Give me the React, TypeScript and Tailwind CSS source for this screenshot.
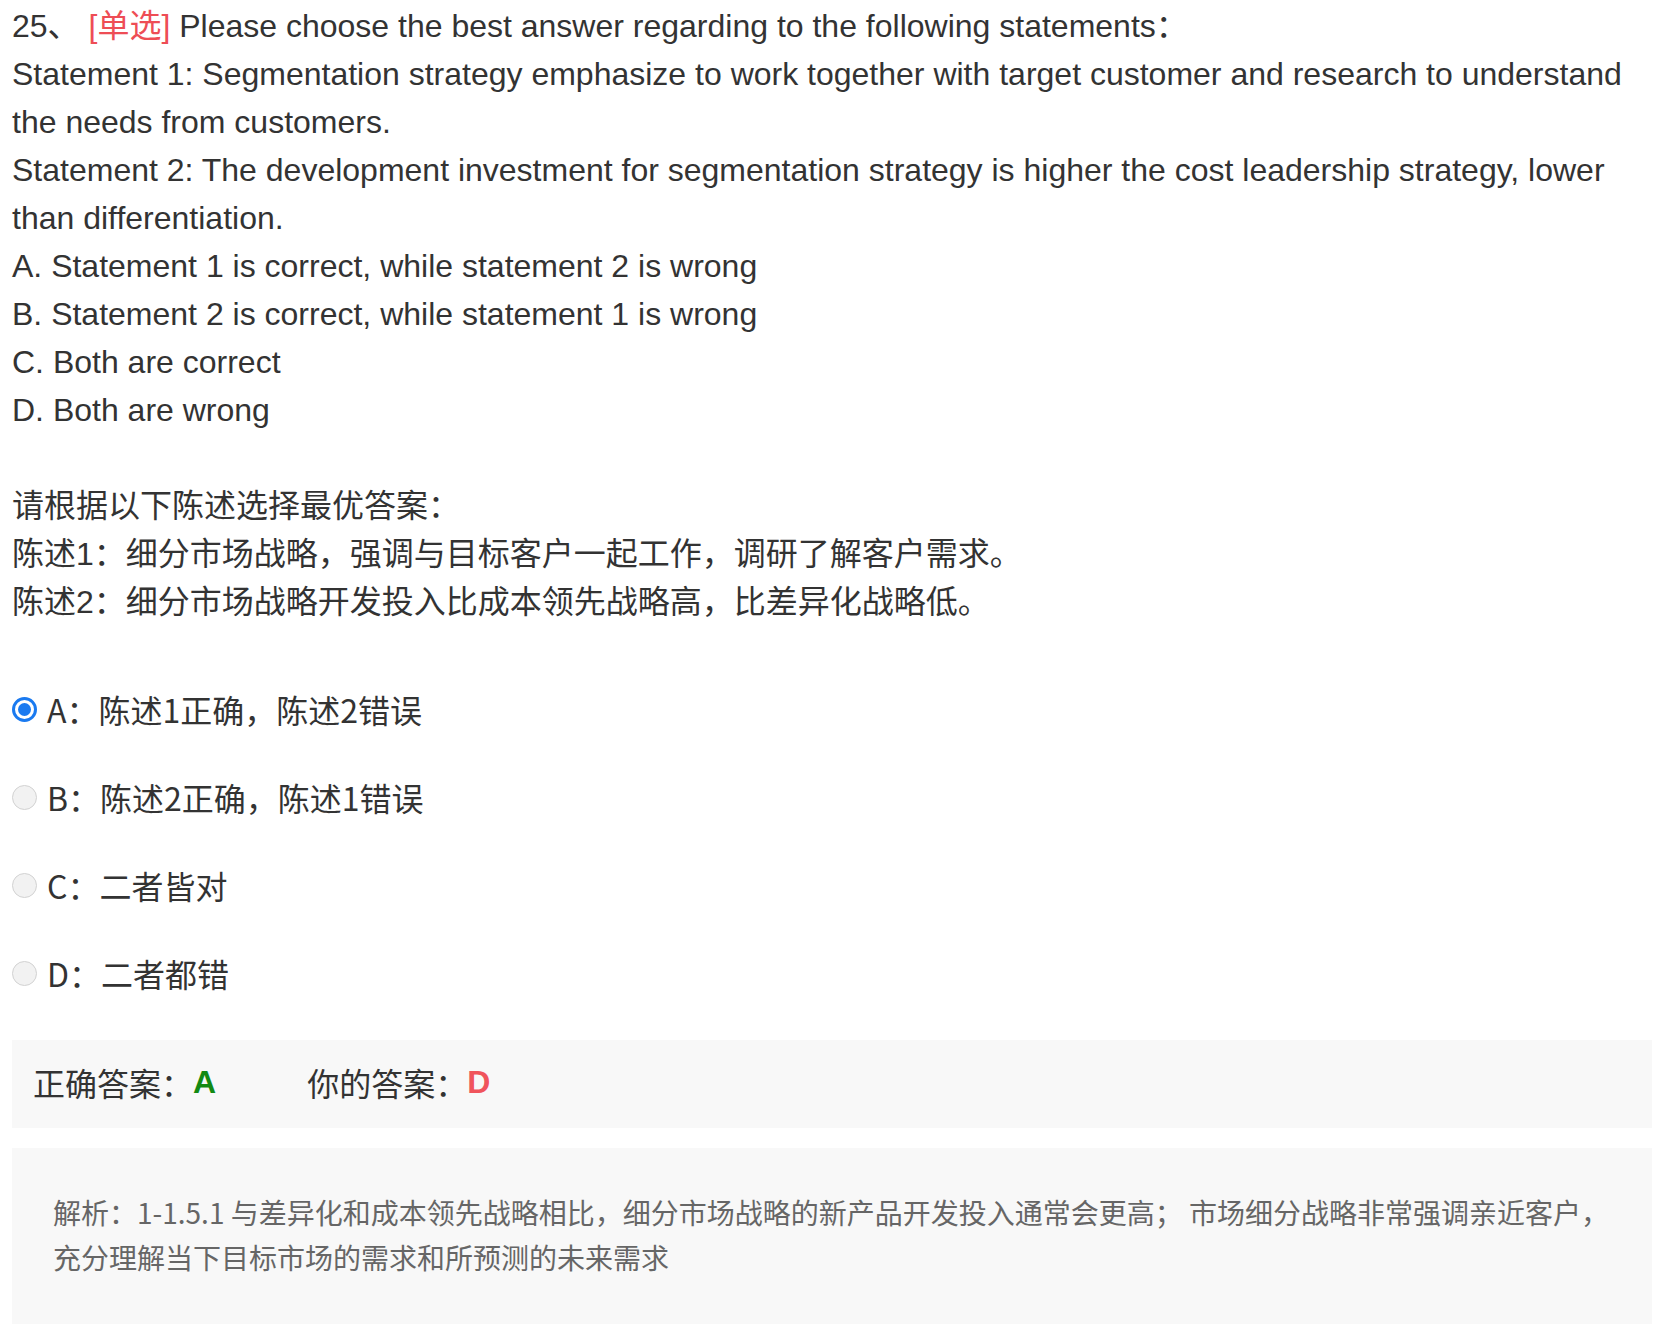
import React from 'react';

interface OptionRowProps {
  label: string;
  text: string;
  checked?: boolean;
}

const Radio: React.FC<{ checked?: boolean }> = ({ checked }) =>
  checked ? (
    <span className="w-[25px] h-[25px] shrink-0 rounded-full border-[3px] border-[#1a7af0] bg-white flex items-center justify-center">
      <span className="w-[13px] h-[13px] rounded-full bg-[#1a7af0]" />
    </span>
  ) : (
    <span className="w-[25px] h-[25px] shrink-0 rounded-full border border-[#d2d2d2] bg-[#f2f2f2]" />
  );

const OptionRow: React.FC<OptionRowProps> = ({ label, text, checked }) => (
  <div className="h-[88px] flex items-center gap-[10px]">
    <Radio checked={checked} />
    <span className="text-[32px] leading-[48px] text-[#333]">
      {label}：{text}
    </span>
  </div>
);

const options: OptionRowProps[] = [
  { label: 'A', text: '陈述1正确，陈述2错误', checked: true },
  { label: 'B', text: '陈述2正确，陈述1错误' },
  { label: 'C', text: '二者皆对' },
  { label: 'D', text: '二者都错' },
];

export default function App() {
  return (
    <div className="min-h-screen bg-white pl-[12px] pr-[10px] pt-[2px] pb-[11px] text-[#333]">
      {/* question stem */}
      <div className="font-['Liberation_Sans','Noto_Sans_CJK_SC',sans-serif] text-[32px] leading-[48px]">
        <p>
          25、 <span className="text-[#ee4d55]">[单选]</span> Please choose the best answer regarding to the following statements：
        </p>
        <p>
          Statement 1: Segmentation strategy emphasize to work together with target customer and research to understand the needs from customers.
        </p>
        <p>
          Statement 2: The development investment for segmentation strategy is higher the cost leadership strategy, lower than differentiation.
        </p>
        <p>A. Statement 1 is correct, while statement 2 is wrong</p>
        <p>B. Statement 2 is correct, while statement 1 is wrong</p>
        <p>C. Both are correct</p>
        <p>D. Both are wrong</p>
        <p>&nbsp;</p>
        <p>请根据以下陈述选择最优答案：</p>
        <p>陈述1：细分市场战略，强调与目标客户一起工作，调研了解客户需求。</p>
        <p>陈述2：细分市场战略开发投入比成本领先战略高，比差异化战略低。</p>
      </div>

      {/* options */}
      <div className="mt-[39px] font-['Noto_Sans_CJK_SC',sans-serif]">
        {options.map((o) => (
          <OptionRow key={o.label} {...o} />
        ))}
      </div>

      {/* result */}
      <div className="mt-[23px] h-[88px] bg-[#f8f8f8] px-[21px] pb-[4px] flex items-center font-['Noto_Sans_CJK_SC',sans-serif] text-[32px] text-[#333]">
        <span>正确答案：</span>
        <span className="font-bold text-[#138a13] font-['Liberation_Sans',sans-serif]">A</span>
        <span className="ml-[91px]">你的答案：</span>
        <span className="font-bold text-[#f0545c] font-['Liberation_Sans',sans-serif]">D</span>
      </div>

      {/* analysis */}
      <div className="mt-[20px] bg-[#f8f8f8] px-[41px] pt-[42px] pb-[44px] font-['Noto_Sans_CJK_SC',sans-serif] text-[28px] leading-[45px] text-[#666]">
        解析：1-1.5.1 与差异化和成本领先战略相比，细分市场战略的新产品开发投入通常会更高； 市场细分战略非常强调亲近客户，充分理解当下目标市场的需求和所预测的未来需求
      </div>
    </div>
  );
}
